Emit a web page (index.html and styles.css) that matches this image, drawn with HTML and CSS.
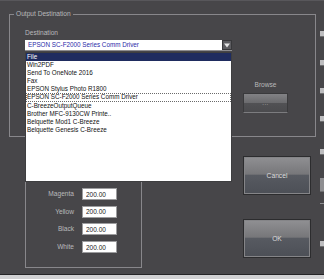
FILE: index.html
```html
<!DOCTYPE html>
<html lang="en">
<head>
    <meta charset="UTF-8">
    <title>Output Destination</title>
    <link rel="stylesheet" href="styles.css">
</head>
<body>
    <div class="screen">
        <div class="dialog">
            <fieldset class="group output">
                <legend>Output Destination</legend>
                <div class="dest-row">
                    <div class="dest">
                        <span class="label">Destination</span>
                        <div class="combo">
                            <span class="combo-text">EPSON SC-F2000 Series Comm Driver</span>
                            <span class="combo-btn">
                                <svg width="6" height="5" viewBox="0 0 6 5"><path d="M0 0.5h6L3 4.5z" fill="#e6e6e6"/></svg>
                            </span>
                        </div>
                        <!-- open dropdown -->
                        <ul class="droplist">
                            <li class="selected">File</li>
                            <li>Win2PDF</li>
                            <li>Send To OneNote 2016</li>
                            <li>Fax</li>
                            <li>EPSON Stylus Photo R1800</li>
                            <li class="focused">EPSON SC-F2000 Series Comm Driver</li>
                            <li>C-BreezeOutputQueue</li>
                            <li>Brother MFC-9130CW Printe..</li>
                            <li>Belquette Mod1 C-Breeze</li>
                            <li>Belquette Genesis C-Breeze</li>
                        </ul>
                    </div>
                    <div class="browse">
                        <span class="label">Browse</span>
                        <button class="browse-btn">...</button>
                    </div>
                </div>
            </fieldset>

            <div class="lower">
                <div class="colors">
                    <span class="label">Magenta</span>
                    <input type="text" value="200.00">
                    <span class="label">Yellow</span>
                    <input type="text" value="200.00">
                    <span class="label">Black</span>
                    <input type="text" value="200.00">
                    <span class="label">White</span>
                    <input type="text" value="200.00">
                </div>
                <div class="actions">
                    <button class="btn">Cancel</button>
                    <button class="btn">OK</button>
                </div>
            </div>
        </div>

        <div class="edge">
            <span class="bit b1"></span>
            <span class="bit b2"></span>
            <span class="bit b3"></span>
            <span class="bit b4"></span>
            <span class="bit b5"></span>
            <span class="bit b6"></span>
            <span class="bit b7"></span>
            <span class="bit b8"></span>
        </div>
    </div>
    <div class="status"></div>
</body>
</html>
```

FILE: styles.css
```css
* {
    box-sizing: border-box;
    margin: 0;
    padding: 0;
}

body {
    width: 324px;
    height: 279px;
    overflow: hidden;
    background-color: #474649;
    font-family: "Liberation Sans", Arial, sans-serif;
}

.screen {
    display: flex;
    height: 275px;
    border-top: 1px solid #58575b;
    border-bottom: 1px solid #242426;
}

.dialog {
    width: 318px;
    padding-top: 9px;
}

.label {
    font-size: 6.6px;
    line-height: 8px;
    color: #b9b9bb;
}

/* group boxes */
.output {
    margin-left: 9px;
    width: 307px;
    border: 1px solid #88878b;
    padding: 11px 0 23px 15px;
}

.output legend {
    font-size: 6.6px;
    line-height: 8px;
    color: #b9b9bb;
    padding: 0 2px;
    margin-left: -11px;
}

.dest-row {
    display: flex;
    gap: 11px;
}

.dest {
    position: relative;
    width: 207px;
}

.dest .label {
    display: block;
}

.combo {
    display: flex;
    height: 10px;
    margin-top: 3px;
    background-color: #fff;
    box-shadow: 0 1px 0 #8d8d90;
}

.combo-text {
    flex: 1;
    padding-left: 3px;
    font-size: 6.3px;
    line-height: 10px;
    color: #2a2aa8;
    white-space: nowrap;
    overflow: hidden;
}

.combo-btn {
    display: flex;
    align-items: center;
    justify-content: center;
    width: 10px;
    background-color: #5c5c60;
    border: 1px solid #38383b;
}

.droplist {
    position: absolute;
    top: 23px;
    left: 0;
    z-index: 2;
    width: 207px;
    height: 130px;
    list-style: none;
    background-color: #fff;
    border: 1px solid #3e3e40;
}

.droplist li {
    padding-left: 1px;
    font-size: 6.3px;
    line-height: 8.1px;
    color: #111;
    white-space: nowrap;
}

.droplist .selected {
    background-color: #1f2c5f;
    color: #fff;
}

.droplist .focused {
    outline: 1px dotted #6a6a6a;
    outline-offset: -1px;
}

.browse {
    display: flex;
    flex-direction: column;
    align-items: center;
    width: 45px;
    margin-top: 52px;
}

.browse-btn {
    width: 45px;
    height: 20px;
    margin-top: 4px;
    border: 1px solid #3a3a3c;
    border-bottom-color: #7c7c7f;
    background: linear-gradient(#828285, #6b6b6e 48%, #515154 52%, #4b4b4e);
    font-family: "Liberation Sans", Arial, sans-serif;
    font-size: 6px;
    color: #c8c8c8;
    letter-spacing: 0.5px;
}

.lower {
    display: flex;
    margin-top: 10px;
    padding-left: 25px;
}

.colors {
    display: grid;
    grid-template-columns: 48px 35px;
    align-content: start;
    column-gap: 8px;
    row-gap: 5.7px;
    width: 117px;
    height: 121px;
    padding-top: 40px;
    border: 1px solid #88878b;
}

.colors .label {
    line-height: 12px;
    text-align: right;
}

.colors input {
    width: 35px;
    height: 12px;
    padding-left: 3px;
    border: 1px solid #9c9c9e;
    outline: none;
    background-color: #fff;
    font-family: "Liberation Sans", Arial, sans-serif;
    font-size: 6.5px;
    color: #222;
}

.actions {
    display: flex;
    flex-direction: column;
    gap: 24px;
    margin-top: 9px;
    margin-left: 101px;
}

.btn {
    width: 68px;
    height: 39px;
    border: 1px solid #2c2c2e;
    box-shadow: inset 0 0 0 1px #858588;
    background: linear-gradient(#909093, #77777a 46%, #575a61 50%, #4c4f56);
    font-family: "Liberation Sans", Arial, sans-serif;
    font-size: 6.7px;
    color: #dcdcdc;
}

/* bits of the next window, cut off at the edge */
.edge {
    display: flex;
    flex-direction: column;
    width: 6px;
    padding-left: 2px;
}

.bit {
    display: block;
    width: 4px;
    height: 6px;
    background-color: #bdbdbf;
    border-bottom: 1px solid #6e6e70;
}

.b1 { margin-top: 30px; }
.b2 { margin-top: 23px; }
.b3 { margin-top: 22px; }
.b4 { margin-top: 22px; }
.b5 { margin-top: 27px; }
.b6 { margin-top: 23px; height: 14px; background-color: #8e8e91; }
.b7 { margin-top: 11px; height: 1px; border: none; background-color: #8e8e91; }
.b8 { margin-top: 37px; }

.status {
    height: 4px;
    background-color: #d0d0d2;
}
```
